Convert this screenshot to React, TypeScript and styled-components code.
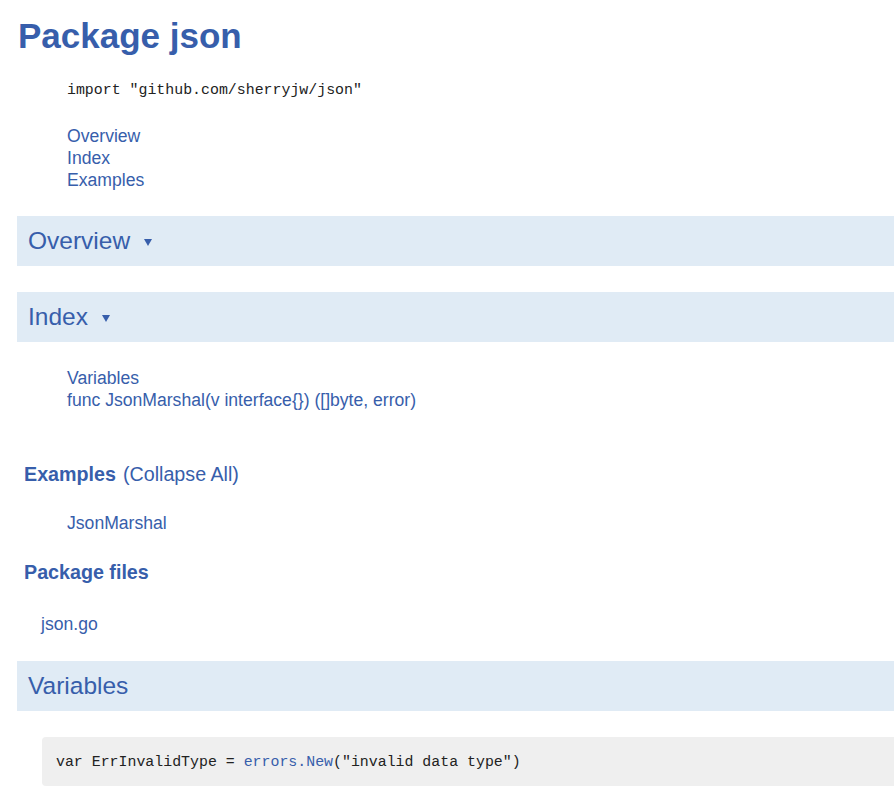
import React from "react";
import styled, { createGlobalStyle } from "styled-components";

const GlobalStyle = createGlobalStyle`
  html, body {
    margin: 0;
    padding: 0;
    background: #ffffff;
    overflow: hidden;
  }
  body {
    font-family: "Liberation Sans", Arial, sans-serif;
    color: #222222;
  }
`;

const Page = styled.div`
  width: 894px;
  padding-bottom: 20px;
`;

const Title = styled.h1`
  margin: 18px 0 0 18px;
  font-size: 35px;
  line-height: 36px;
  font-weight: bold;
  color: #375eab;
`;

const Indented = styled.div<{ $top: number }>`
  margin-top: ${(p) => p.$top}px;
  padding-left: 67px;
`;

const ImportLine = styled.pre`
  margin: 0 0 24px 0;
  font-family: "Liberation Mono", "DejaVu Sans Mono", monospace;
  font-size: 14.9px;
  line-height: 22px;
  color: #222222;
`;

const LinkLine = styled.a`
  display: block;
  font-size: 17.6px;
  line-height: 22px;
  color: #375eab;
  text-decoration: none;
`;

const Bar = styled.h2<{ $top: number }>`
  display: flex;
  align-items: center;
  margin: ${(p) => p.$top}px 0 0 17px;
  height: 50px;
  padding-left: 11px;
  background: #e0ebf5;
  font-size: 24.5px;
  font-weight: normal;
  color: #375eab;
`;

const Arrow = styled.span`
  display: inline-block;
  margin-left: 14px;
  margin-top: 2px;
  width: 0;
  height: 0;
  border-left: 4px solid transparent;
  border-right: 4px solid transparent;
  border-top: 7px solid #375eab;
`;

const SubHeading = styled.h3<{ $top: number }>`
  margin: ${(p) => p.$top}px 0 0 24px;
  font-size: 19.7px;
  line-height: 24px;
  font-weight: bold;
  color: #375eab;
`;

const Light = styled.span`
  font-weight: normal;
  margin-left: 7px;
`;

const FileLink = styled.a<{ $top: number }>`
  display: block;
  margin: ${(p) => p.$top}px 0 0 41px;
  font-size: 17.6px;
  line-height: 22px;
  color: #375eab;
  text-decoration: none;
`;

const CodeBlock = styled.pre`
  margin: 26px 0 0 42px;
  height: 49px;
  display: flex;
  align-items: center;
  padding-left: 14px;
  background: #efefef;
  border-radius: 4px 0 0 4px;
  font-family: "Liberation Mono", "DejaVu Sans Mono", monospace;
  font-size: 14.9px;
  color: #222222;
`;

const CodeLink = styled.span`
  color: #375eab;
`;

export default function App() {
  return (
    <Page>
      <GlobalStyle />
      <Title>Package json</Title>
      <Indented $top={25}>
        <ImportLine>import "github.com/sherryjw/json"</ImportLine>
        <LinkLine href="#overview">Overview</LinkLine>
        <LinkLine href="#index">Index</LinkLine>
        <LinkLine href="#examples">Examples</LinkLine>
      </Indented>

      <Bar $top={25}>
        Overview <Arrow />
      </Bar>
      <Bar $top={26}>
        Index <Arrow />
      </Bar>

      <Indented $top={25}>
        <LinkLine href="#variables">Variables</LinkLine>
        <LinkLine href="#JsonMarshal">
          {"func JsonMarshal(v interface{}) ([]byte, error)"}
        </LinkLine>
      </Indented>

      <SubHeading $top={51}>
        Examples<Light>(Collapse All)</Light>
      </SubHeading>
      <Indented $top={26}>
        <LinkLine href="#example_JsonMarshal">JsonMarshal</LinkLine>
      </Indented>

      <SubHeading $top={26}>Package files</SubHeading>
      <FileLink $top={29} href="#json.go">
        json.go
      </FileLink>

      <Bar $top={26}>Variables</Bar>
      <CodeBlock>
        var ErrInvalidType = <CodeLink>errors.New</CodeLink>("invalid data type")
      </CodeBlock>
    </Page>
  );
}
